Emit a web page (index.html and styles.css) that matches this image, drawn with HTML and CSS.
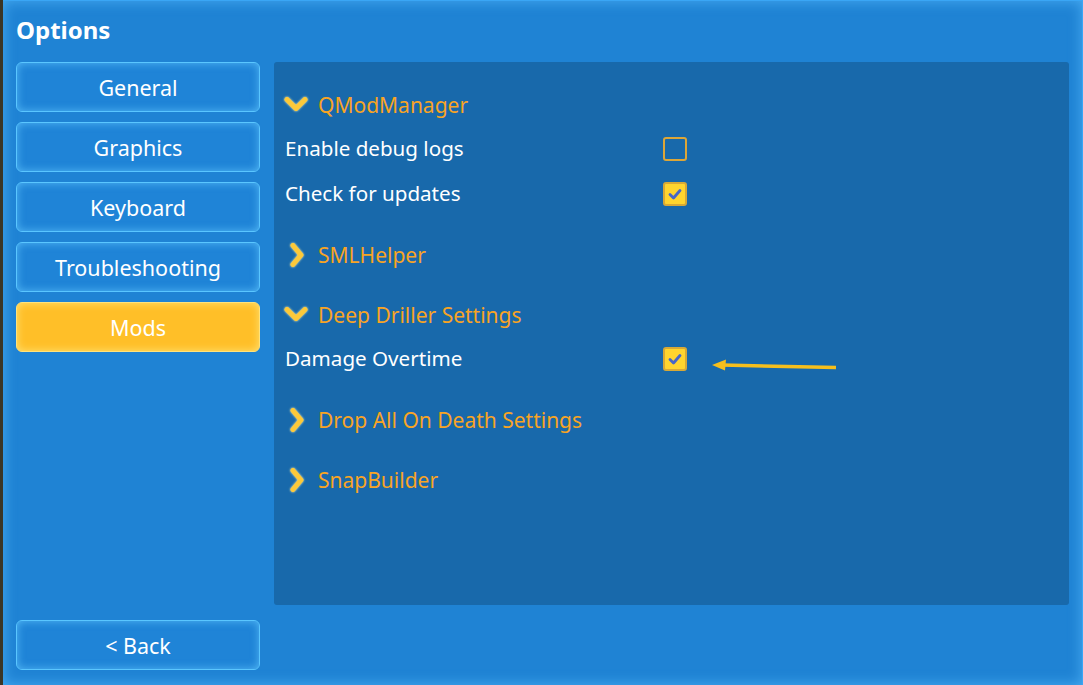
FILE: index.html
```html
<!DOCTYPE html>
<html lang="en">
<head>
    <meta charset="UTF-8">
    <title>Options</title>
    <link rel="stylesheet" href="styles.css">
</head>
<body>
    <div class="window">
        <h1 class="title">Options</h1>
        <div class="body">
            <nav class="tabs">
                <div class="tab">General</div>
                <div class="tab">Graphics</div>
                <div class="tab">Keyboard</div>
                <div class="tab">Troubleshooting</div>
                <div class="tab active">Mods</div>
                <div class="tab back">&lt; Back</div>
            </nav>

            <section class="content">
                <div class="group open">
                    <svg class="chev" viewBox="0 0 24 24"><path d="M3 6.5 L12 15.5 L21 6.5"/></svg>
                    <span>QModManager</span>
                </div>
                <div class="setting">
                    <span>Enable debug logs</span>
                    <span class="check"></span>
                </div>
                <div class="setting">
                    <span>Check for updates</span>
                    <span class="check on"><svg viewBox="0 0 20 20"><path d="M5 10.5 L8.5 14 L15 6.5"/></svg></span>
                </div>

                <div class="group">
                    <svg class="chev" viewBox="0 0 24 24"><path d="M9 2.5 L17 12 L9 21.5"/></svg>
                    <span>SMLHelper</span>
                </div>

                <div class="group open">
                    <svg class="chev" viewBox="0 0 24 24"><path d="M3 6.5 L12 15.5 L21 6.5"/></svg>
                    <span>Deep Driller Settings</span>
                </div>
                <div class="setting">
                    <span>Damage Overtime</span>
                    <span class="check on"><svg viewBox="0 0 20 20"><path d="M5 10.5 L8.5 14 L15 6.5"/></svg></span>
                </div>

                <div class="group">
                    <svg class="chev" viewBox="0 0 24 24"><path d="M9 2.5 L17 12 L9 21.5"/></svg>
                    <span>Drop All On Death Settings</span>
                </div>
                <div class="group">
                    <svg class="chev" viewBox="0 0 24 24"><path d="M9 2.5 L17 12 L9 21.5"/></svg>
                    <span>SnapBuilder</span>
                </div>

                <!-- annotation arrow pointing at the checkbox -->
                <svg class="pointer" width="140" height="20" viewBox="0 0 140 20">
                    <line x1="12" y1="9" x2="126" y2="11.5"/>
                    <path d="M2 9 L16 3.5 L15 14.5 Z"/>
                </svg>
            </section>
        </div>
    </div>
</body>
</html>
```

FILE: styles.css
```css
html, body {
    margin: 0;
    height: 100%;
}
body {
    background-color: #3b3526;
    font-family: "Noto Sans", "Open Sans", sans-serif;
    color: #fff;
}
.window {
    box-sizing: border-box;
    height: 685px;
    margin-left: 3px;
    padding: 12px 13px 15px 13px;
    background-color: #1f83d4;
    box-shadow: inset 0 0 14px rgba(90, 190, 255, 0.7);
    border-top: 1px solid #3aa6f5;
    border-right: 1px solid #3aa6f5;
    display: flex;
    flex-direction: column;
}
.title {
    margin: 0;
    font-size: 24px;
    font-weight: bold;
    line-height: 34px;
    height: 38px;
}
.body {
    flex: 1;
    display: grid;
    grid-template-columns: 244px 1fr;
    gap: 14px;
    margin-top: 11px;
}
.tabs {
    display: flex;
    flex-direction: column;
    gap: 10px;
}
.tab {
    height: 50px;
    box-sizing: border-box;
    display: flex;
    align-items: center;
    justify-content: center;
    font-size: 21.5px;
    border: 1px solid #5ac6ff;
    border-radius: 6px;
    background-color: #1f84d7;
    box-shadow: inset 0 0 9px rgba(100, 200, 255, 0.75);
}
.tab.active {
    background-color: #ffbf28;
    border-color: #ffe37c;
    box-shadow: inset 0 0 9px rgba(255, 232, 130, 0.85);
}
.tab.back {
    margin-top: auto;
}
.content {
    position: relative;
    height: 543px;
    box-sizing: border-box;
    padding: 5px 11px 0 11px;
    background-color: #1869ab;
    border-radius: 3px;
}
.group, .setting {
    height: 45px;
    display: flex;
    align-items: center;
    font-size: 20.6px;
}
.group {
    margin-top: 15px;
    color: #f8a424;
    font-size: 21px;
}
.group span {
    margin-left: 10px;
}
.chev {
    width: 24px;
    height: 24px;
    margin-left: -1px;
    fill: none;
    stroke: #fcc93a;
    stroke-width: 5;
    stroke-linecap: round;
    stroke-linejoin: round;
    filter: drop-shadow(0 0 1px #fff3b0);
}
.setting {
    display: grid;
    grid-template-columns: 378px 24px;
    align-items: center;
}
.setting > span:first-child {
    margin-top: -3px;
}
.check {
    width: 24px;
    height: 24px;
    box-sizing: border-box;
    margin-top: -2px;
    border: 2px solid #dca638;
    border-radius: 3px;
}
.check.on {
    background-color: #ffd52e;
    border-color: #d8a936;
}
.check svg {
    display: block;
    width: 20px;
    height: 20px;
    fill: none;
    stroke: #4666c8;
    stroke-width: 2.8;
    stroke-linecap: round;
    stroke-linejoin: round;
}
.pointer {
    position: absolute;
    left: 436px;
    top: 294px;
}
.pointer line {
    stroke: #f6bf1c;
    stroke-width: 3.5;
}
.pointer path {
    fill: #f6bf1c;
}
```
